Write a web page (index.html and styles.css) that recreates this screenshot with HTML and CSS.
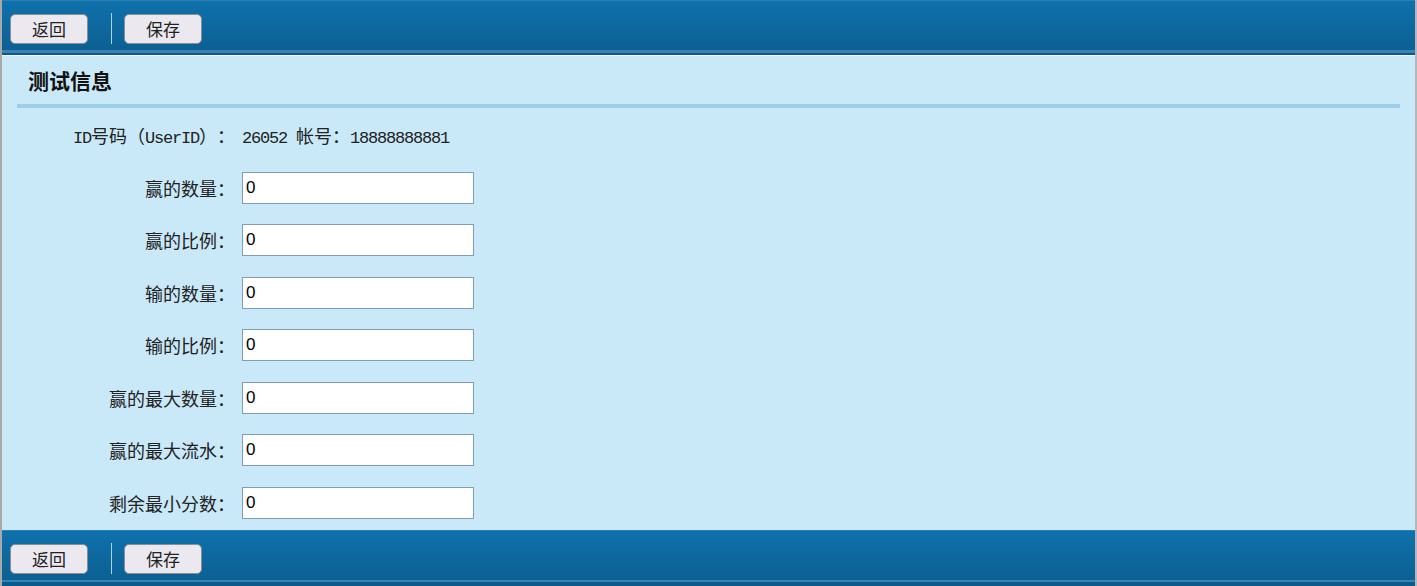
FILE: index.html
```html
<!DOCTYPE html>
<html lang="zh-CN">
<head>
<meta charset="utf-8">
<title>测试信息</title>
<link rel="stylesheet" href="styles.css">
</head>
<body>
<div class="frame">
  <header class="bar bar-top">
    <button class="btn" type="button">返回</button>
    <span class="sep"></span>
    <button class="btn" type="button">保存</button>
  </header>

  <main class="content">
    <h2 class="title">测试信息</h2>
    <div class="rule"></div>

    <div class="form">
      <div class="label"><span class="en">ID</span>号码（<span class="en">UserID</span>）：</div>
      <div class="value"><span class="en">26052 </span>帐号：<span class="en">18888888881</span></div>

      <label class="label" for="f1">赢的数量：</label>
      <div class="value"><input class="field" id="f1" type="text" value="0"></div>

      <label class="label" for="f2">赢的比例：</label>
      <div class="value"><input class="field" id="f2" type="text" value="0"></div>

      <label class="label" for="f3">输的数量：</label>
      <div class="value"><input class="field" id="f3" type="text" value="0"></div>

      <label class="label" for="f4">输的比例：</label>
      <div class="value"><input class="field" id="f4" type="text" value="0"></div>

      <label class="label" for="f5">赢的最大数量：</label>
      <div class="value"><input class="field" id="f5" type="text" value="0"></div>

      <label class="label" for="f6">赢的最大流水：</label>
      <div class="value"><input class="field" id="f6" type="text" value="0"></div>

      <label class="label" for="f7">剩余最小分数：</label>
      <div class="value"><input class="field" id="f7" type="text" value="0"></div>
    </div>
  </main>

  <footer class="bar bar-bottom">
    <button class="btn" type="button">返回</button>
    <span class="sep"></span>
    <button class="btn" type="button">保存</button>
  </footer>
</div>
</body>
</html>
```

FILE: styles.css
```css
html, body {
  margin: 0;
  padding: 0;
  height: 100%;
  overflow: hidden;
}

body {
  font-family: "Noto Sans CJK SC", "Liberation Sans", sans-serif;
  font-size: 18px;
  color: #1e1e1e;
  background: #b4b4b4;
  text-spacing-trim: space-all;
}

/* outer window with thin grey edges */
.frame {
  width: 1413px;
  height: 586px;
  border-left: 2px solid #a9a9a9;
  border-right: 2px solid #b6b6b6;
  display: flex;
  flex-direction: column;
  background: #c9e9f9;
}

/* toolbar bars */
.bar {
  flex: 0 0 auto;
  height: 56px;
  box-sizing: border-box;
  padding: 14px 0 0 8px;
  display: flex;
  align-items: flex-start;
}

.bar-top {
  background: linear-gradient(to bottom,
    #2b7fb5 0, #2b7fb5 1px,
    #0f71ab 1px, #0c6093 50px,
    #3484b8 50px, #3484b8 53px,
    #0b5a88 53px, #0b5a88 55px,
    #ffffff 55px, #ffffff 56px);
}

.bar-bottom {
  background: linear-gradient(to bottom,
    #2a80b6 0, #2a80b6 1px,
    #0f71ab 1px, #0c6093 50px,
    #3484b8 50px, #3484b8 52px,
    #0b5a88 52px, #0b5a88 56px);
}

.btn {
  width: 78px;
  height: 30px;
  margin: 0;
  padding: 0;
  box-sizing: border-box;
  border: 1px solid #8b8d92;
  border-radius: 5px;
  background: #ebe9ef;
  color: #222;
  font-family: "Noto Sans CJK SC", sans-serif;
  font-size: 17px;
  line-height: 26px;
  cursor: pointer;
}

.sep {
  width: 1px;
  height: 31px;
  margin: -1px 12px 0 23px;
  background: #a9d4ef;
}

/* main area */
.content {
  flex: 1 1 auto;
  min-height: 0;
  overflow: hidden;
}

.title {
  margin: 0;
  height: 48px;
  padding-left: 26px;
  font-size: 21px;
  font-weight: bold;
  line-height: 48px;
  color: #111;
}

.rule {
  height: 4px;
  margin: 0 15px;
  background: #9ecfea;
}

.form {
  display: grid;
  grid-template-columns: 233px 1fr;
  grid-auto-rows: 52.5px;
  column-gap: 7px;
  align-items: center;
  margin-top: 0.75px;
}

.label {
  text-align: right;
  white-space: nowrap;
  color: #222;
}

.value {
  white-space: nowrap;
  color: #222;
}

/* half-width latin runs: 9px per character */
.en {
  font-family: "Liberation Mono", monospace;
  font-size: 17px;
  letter-spacing: -1.2px;
  white-space: pre;
}

.field {
  display: block;
  width: 232px;
  height: 32px;
  box-sizing: border-box;
  margin: 0;
  padding: 0 3px;
  border: 1px solid #7f9db9;
  background: #fff;
  font-family: "Liberation Sans", sans-serif;
  font-size: 17px;
  color: #000;
  outline: none;
}
```
